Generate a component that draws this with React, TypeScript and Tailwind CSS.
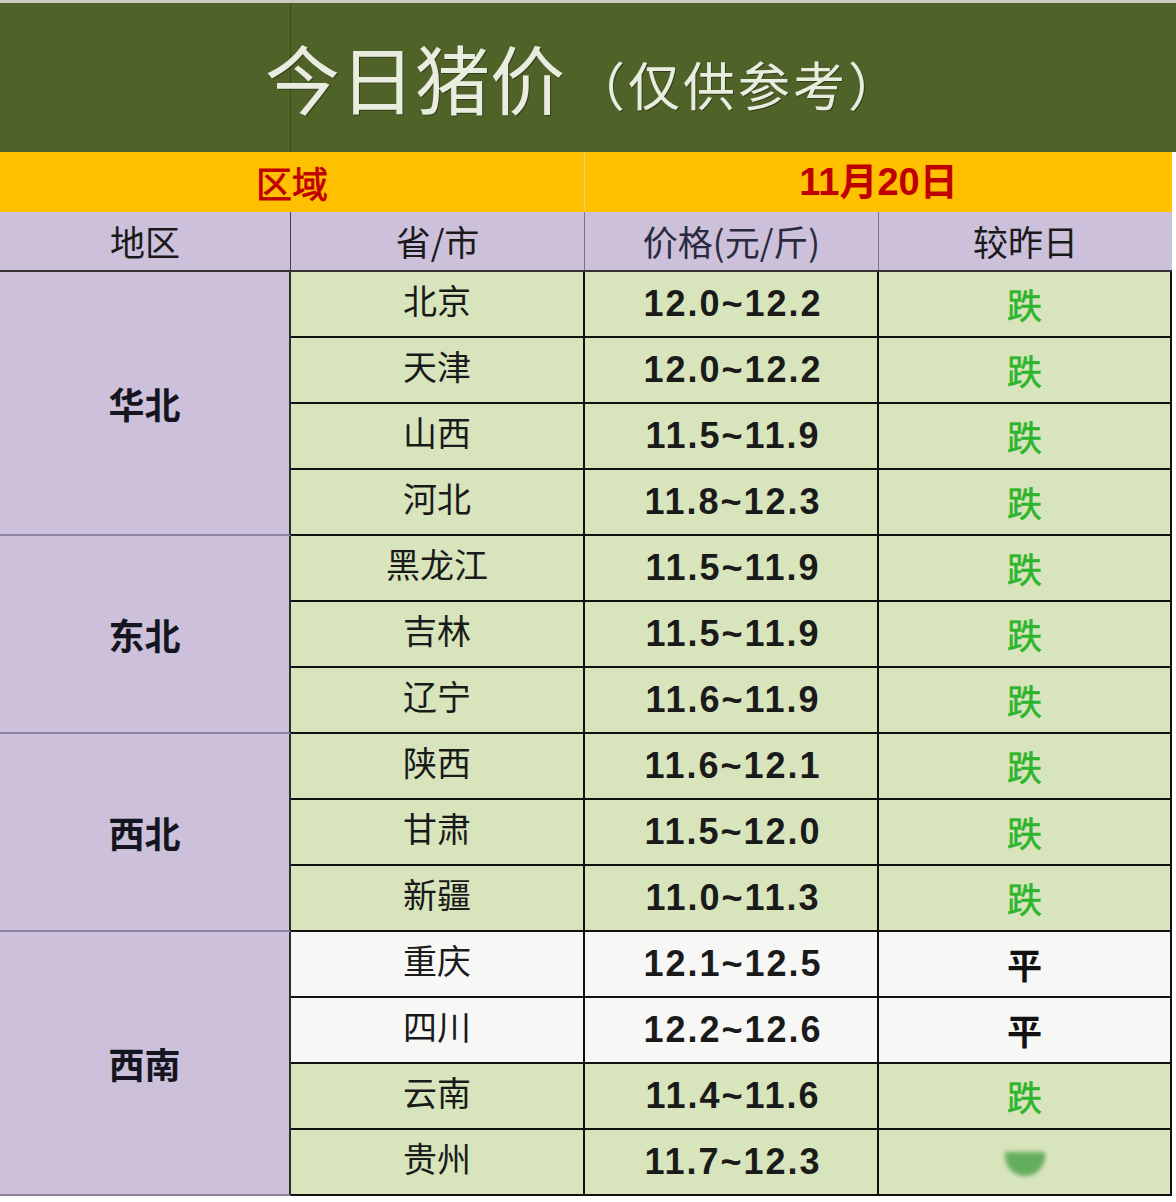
import React from 'react';

// 今日猪价表：标题 + 日期条 + 表头 + 按大区分组的省份行

type Row = { prov: string; price: string; trend: '跌' | '平' | ''; white?: boolean };
type Group = { region: string; rows: Row[] };

const GROUPS: Group[] = [
  {
    region: '华北',
    rows: [
      { prov: '北京', price: '12.0~12.2', trend: '跌' },
      { prov: '天津', price: '12.0~12.2', trend: '跌' },
      { prov: '山西', price: '11.5~11.9', trend: '跌' },
      { prov: '河北', price: '11.8~12.3', trend: '跌' },
    ],
  },
  {
    region: '东北',
    rows: [
      { prov: '黑龙江', price: '11.5~11.9', trend: '跌' },
      { prov: '吉林', price: '11.5~11.9', trend: '跌' },
      { prov: '辽宁', price: '11.6~11.9', trend: '跌' },
    ],
  },
  {
    region: '西北',
    rows: [
      { prov: '陕西', price: '11.6~12.1', trend: '跌' },
      { prov: '甘肃', price: '11.5~12.0', trend: '跌' },
      { prov: '新疆', price: '11.0~11.3', trend: '跌' },
    ],
  },
  {
    region: '西南',
    rows: [
      { prov: '重庆', price: '12.1~12.5', trend: '平', white: true },
      { prov: '四川', price: '12.2~12.6', trend: '平', white: true },
      { prov: '云南', price: '11.4~11.6', trend: '跌' },
      { prov: '贵州', price: '11.7~12.3', trend: '' },
    ],
  },
];

const CJK = "font-['Noto_Sans_CJK_SC',sans-serif]";
const NUM = "font-['Liberation_Sans','Noto_Sans_CJK_SC',sans-serif]";

function DataRow({ r }: { r: Row }) {
  const bg = r.white ? 'bg-[#f7f8f6]' : 'bg-[#d8e4bc]';
  return (
    <div className={`grid grid-cols-[294px_294px_293px] h-[66px] border-b-2 border-[#111] ${bg}`}>
      <div className={`flex items-center justify-center pb-[10px] border-r-2 border-[#111] text-[34px] text-[#1a1a1a] ${CJK}`}>
        {r.prov}
      </div>
      <div className={`flex items-center justify-center pl-[4px] border-r-2 border-[#111] text-[36px] tracking-[2px] font-bold text-[#1a1a1a] ${NUM}`}>
        {r.price}
      </div>
      <div className={`flex items-center justify-center border-r-2 border-[#111] text-[35px] ${CJK}`}>
        {r.trend === '跌' && <span className="text-[#2db52d] [-webkit-text-stroke:0.6px_#2db52d]">跌</span>}
        {r.trend === '平' && <span className="font-bold text-[#111]">平</span>}
        {r.trend === '' && <span className="mt-[4px] w-[40px] h-[24px] rounded-b-full bg-[#3f9b3f] opacity-75 blur-[2px]" />}
      </div>
    </div>
  );
}

export default function App() {
  return (
    <div className="w-[1176px] h-[1202px] bg-white overflow-hidden">
      {/* 标题 */}
      <div className="relative h-[152px] bg-[#4f6228] border-t-[3px] border-[#c9ccc0] flex items-center pl-[265px] pb-[2px]">
        <div className="absolute left-[290px] top-0 bottom-0 w-px bg-[#3b4a1c]" />
        <span className={`relative text-[75px] leading-none text-[#e8ede0] drop-shadow-[1px_1px_0_rgba(0,0,0,0.35)] ${CJK}`}>今日猪价</span>
        <span className={`relative ml-[8px] mt-[14px] text-[52px] leading-none tracking-[3px] text-[#e8ede0] drop-shadow-[1px_1px_0_rgba(0,0,0,0.35)] ${CJK}`}>（仅供参考）</span>
      </div>

      <div className="w-[1172px]">
        {/* 日期条 */}
        <div className="grid grid-cols-[585px_587px] h-[60px] bg-[#ffc000]">
          <div className={`flex items-center justify-center border-r border-[#e6cf8a] text-[36px] text-[#c00000] [-webkit-text-stroke:0.8px_#c00000] ${CJK}`}>
            区域
          </div>
          <div className={`flex items-center justify-center text-[38px] font-bold text-[#c00000] ${NUM}`}>
            11月20日
          </div>
        </div>

        {/* 表头 */}
        <div className={`grid grid-cols-[291px_294px_294px_293px] h-[60px] bg-[#ccc0da] border-b-2 border-[#333] text-[35px] text-[#1a1a1a] ${CJK}`}>
          <div className="flex items-center justify-center border-r border-[#444]">地区</div>
          <div className="flex items-center justify-center border-r border-[#777]">省/市</div>
          <div className="flex items-center justify-center border-r border-[#777] text-[#2a2a3e]">价格(元/斤)</div>
          <div className="flex items-center justify-center">较昨日</div>
        </div>

        {/* 数据 */}
        {GROUPS.map((g) => (
          <div key={g.region} className="flex">
            <div className={`w-[291px] shrink-0 flex items-center justify-center bg-[#ccc0da] border-r-2 border-b-2 border-r-[#2b2b2b] border-b-[#8c86a0] text-[36px] font-bold text-[#15151f] ${CJK}`}>
              {g.region}
            </div>
            <div className="flex flex-col">
              {g.rows.map((r) => (
                <DataRow key={r.prov} r={r} />
              ))}
            </div>
          </div>
        ))}
      </div>
    </div>
  );
}
